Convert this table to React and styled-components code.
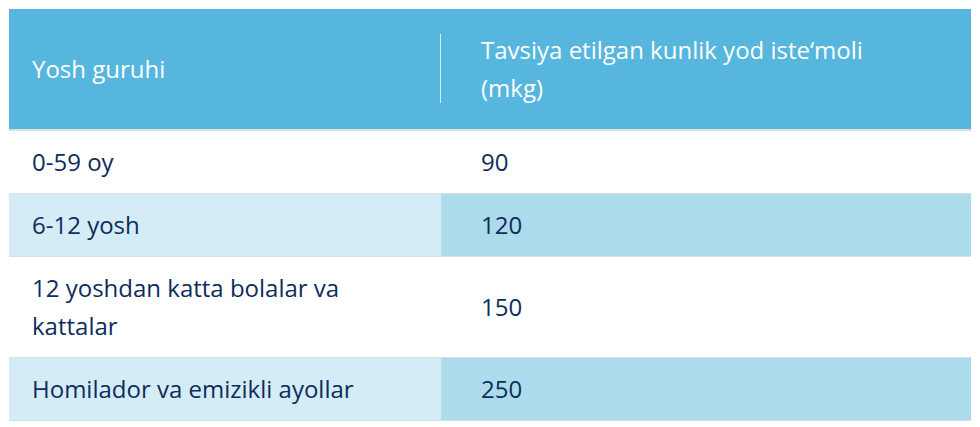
import React from 'react';
import styled, { createGlobalStyle } from 'styled-components';

const GlobalStyle = createGlobalStyle`
  body {
    margin: 0;
    background: #ffffff;
    font-family: 'Open Sans', 'Lato', sans-serif;
  }
`;

const Page = styled.div`
  padding: 9px;
`;

const Table = styled.table`
  width: 962px;
  border-collapse: collapse;
  table-layout: fixed;
`;

const HeadRow = styled.tr`
  background: #56b6dd;
  border-bottom: 2px solid #dcdfe2;
`;

const HeadCell = styled.th`
  position: relative;
  text-align: left;
  font-weight: 400;
  font-size: 24px;
  line-height: 38px;
  color: #ffffff;
  padding: 22px 40px 22px ${props => (props.first ? '23px' : '40px')};
  vertical-align: middle;

  &::after {
    content: '';
    display: ${props => (props.first ? 'block' : 'none')};
    position: absolute;
    right: 0;
    top: 25px;
    bottom: 26px;
    width: 1px;
    background: rgba(255, 255, 255, 0.75);
  }
`;

const Row = styled.tr`
  border-bottom: 1px solid #dcdfe2;
`;

const Cell = styled.td`
  font-size: 24px;
  line-height: 38px;
  color: #0e2c5c;
  padding: 12px 40px 12px ${props => (props.first ? '23px' : '40px')};
  vertical-align: middle;
  background: ${props => {
    if (!props.shaded) return '#ffffff';
    return props.first ? '#d3ecf6' : '#acdbec';
  }};
`;

// keeps the line breaks where the reference puts them
const Wrap = styled.span`
  display: block;
  max-width: ${props => props.max}px;
`;

const rows = [
  { group: '0-59 oy', amount: '90' },
  { group: '6-12 yosh', amount: '120' },
  { group: '12 yoshdan katta bolalar va kattalar', amount: '150' },
  { group: 'Homilador va emizikli ayollar', amount: '250' },
];

const App = () => {
  return (
    <Page>
      <GlobalStyle />
      <Table>
        <colgroup>
          <col style={{ width: 432 }} />
          <col style={{ width: 530 }} />
        </colgroup>
        <thead>
          <HeadRow>
            <HeadCell first>Yosh guruhi</HeadCell>
            <HeadCell>
              <Wrap max={420}>Tavsiya etilgan kunlik yod iste‘moli (mkg)</Wrap>
            </HeadCell>
          </HeadRow>
        </thead>
        <tbody>
          {rows.map((row, i) => (
            <Row key={row.group}>
              <Cell first shaded={i % 2 === 1}>
                <Wrap max={340}>{row.group}</Wrap>
              </Cell>
              <Cell shaded={i % 2 === 1}>{row.amount}</Cell>
            </Row>
          ))}
        </tbody>
      </Table>
    </Page>
  );
};

export default App;
